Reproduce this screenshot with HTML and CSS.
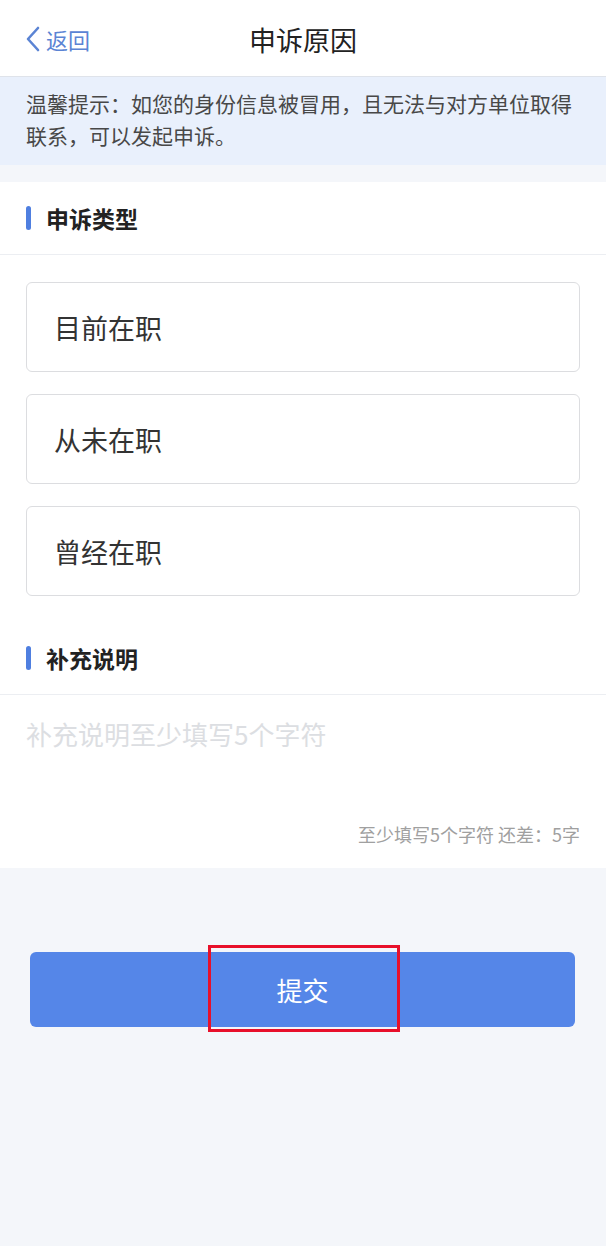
FILE: index.html
```html
<!DOCTYPE html>
<html lang="zh-CN">
<head>
  <meta charset="UTF-8" />
  <meta name="viewport" content="width=device-width, initial-scale=1.0"/>
  <title>申诉原因</title>
  <link rel="stylesheet" href="styles.css">
</head>
<body>

  <!-- 顶部导航 -->
  <div class="nav">
    <a class="back">
      <svg width="18" height="28" viewBox="0 0 18 28"><path d="M14 3 L4 14 L14 25" fill="none" stroke="#5b84d4" stroke-width="2.6" stroke-linecap="round" stroke-linejoin="round"/></svg>
      <span>返回</span>
    </a>
    <div class="nav-title">申诉原因</div>
  </div>

  <!-- 提示 -->
  <div class="tip">温馨提示：如您的身份信息被冒用，且无法与对方单位取得联系，可以发起申诉。</div>

  <div class="panel">
    <div class="sec-head"><i></i>申诉类型</div>
    <div class="options">
      <div class="opt">目前在职</div>
      <div class="opt">从未在职</div>
      <div class="opt">曾经在职</div>
    </div>

    <div class="sec-head"><i></i>补充说明</div>
    <div class="note">
      <textarea placeholder="补充说明至少填写5个字符"></textarea>
      <div class="count">至少填写5个字符 还差：5字</div>
    </div>
  </div>

  <div class="submit-wrap">
    <button class="submit">提交</button>
    <div class="mark"></div>
  </div>

</body>
</html>
```

FILE: styles.css
```css
body {
  margin: 0;
  font-family: "Noto Sans CJK SC", "Noto Sans", sans-serif;
  background: #f4f6fa;
  color: #333;
  min-height: 1246px;
}

.nav {
  height: 76px;
  background: #fff;
  border-bottom: 1px solid #dfe3ea;
  display: flex;
  align-items: center;
  justify-content: center;
  position: relative;
}

.back {
  position: absolute;
  left: 24px;
  top: 24px;
  display: flex;
  align-items: center;
  color: #5b84d4;
  font-size: 22px;
  line-height: 30px;
}

.back svg {
  margin-right: 4px;
}

.nav-title {
  font-size: 27px;
  color: #222;
  margin-top: 2px;
}

.tip {
  background: #e9f0fc;
  padding: 10px 26px 14px 26px;
  font-size: 21px;
  line-height: 32px;
  color: #484848;
}

.panel {
  background: #fff;
  margin-top: 17px;
}

.sec-head {
  height: 72px;
  display: flex;
  align-items: center;
  padding-left: 26px;
  font-size: 23px;
  font-weight: bold;
  color: #222;
  border-bottom: 1px solid #eceef2;
}

.sec-head i {
  display: block;
  width: 5px;
  height: 24px;
  border-radius: 3px;
  background: #4f7fe0;
  margin-right: 15px;
}

.options {
  padding: 27px 26px 26px;
  display: flex;
  flex-direction: column;
  gap: 22px;
}

.opt {
  height: 88px;
  border: 1px solid #dcdde0;
  border-radius: 6px;
  display: flex;
  align-items: center;
  padding-left: 27px;
  font-size: 27px;
  color: #333;
}

.note {
  padding: 22px 26px 22px;
}

.note textarea {
  display: block;
  width: 100%;
  height: 105px;
  border: none;
  outline: none;
  resize: none;
  padding: 0;
  font-family: inherit;
  font-size: 26px;
  line-height: 34px;
  color: #333;
  background: transparent;
}

.note textarea::placeholder {
  color: #dcdee2;
}

.count {
  text-align: right;
  font-size: 18px;
  color: #a0a0a0;
  line-height: 24px;
}

.submit-wrap {
  padding: 84px 31px 0 30px;
  position: relative;
}

.submit {
  display: block;
  width: 100%;
  height: 75px;
  border: none;
  border-radius: 6px;
  background: #5586e8;
  color: #fff;
  font-family: inherit;
  font-size: 26px;
}

.mark {
  position: absolute;
  left: 208px;
  top: 77px;
  width: 186px;
  height: 81px;
  border: 3px solid #e8102a;
}
```
